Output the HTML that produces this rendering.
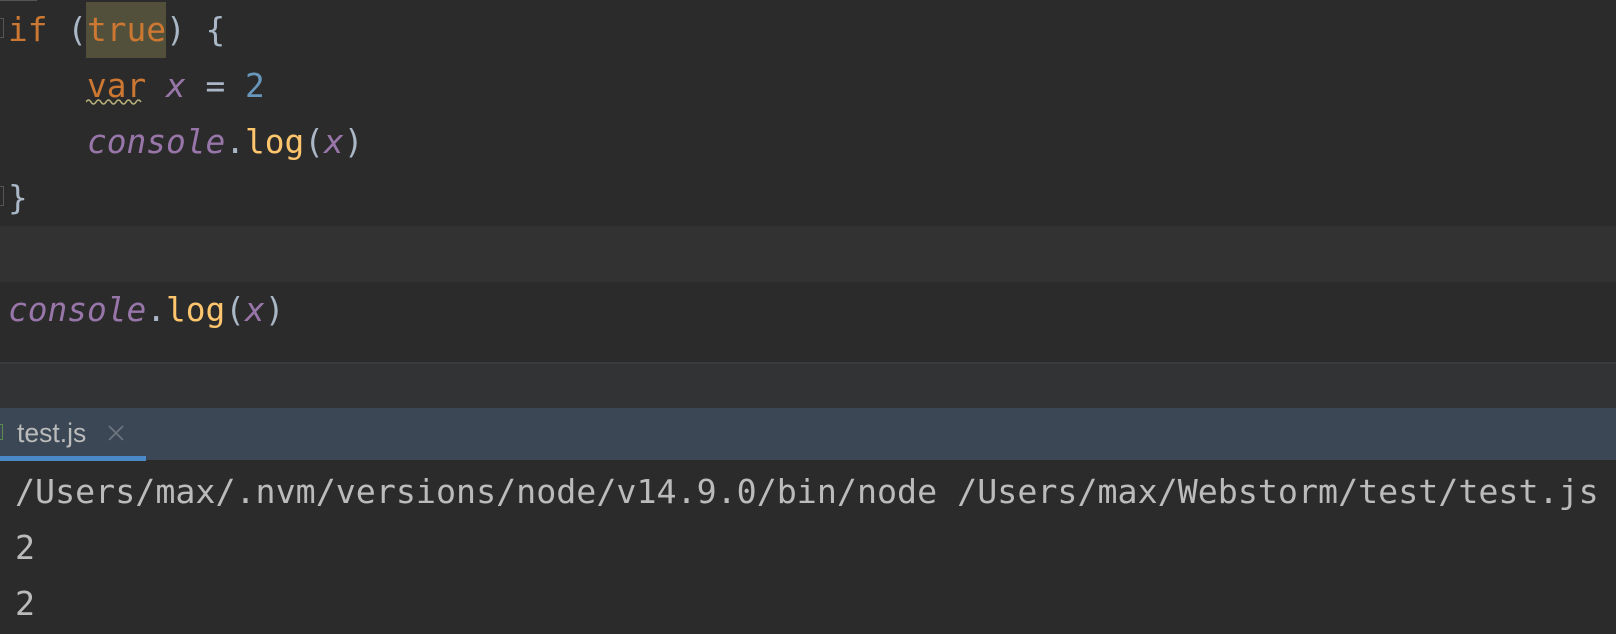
<!DOCTYPE html>
<html><head><meta charset="utf-8"><style>
html,body{margin:0;padding:0;width:1616px;height:634px;overflow:hidden;background:#2b2b2b;}
.a{position:absolute;}
.code{font-family:"DejaVu Sans Mono","Liberation Mono",monospace;font-size:32.8px;white-space:pre;line-height:56px;color:#a9b7c6;}
.k{color:#cc7832}.v{color:#9876aa;font-style:italic}.f{color:#ffc66d}.n{color:#6897bb}
.out{font-family:"DejaVu Sans Mono","Liberation Mono",monospace;font-size:33.3px;white-space:pre;line-height:56px;color:#bbbbbb;}
</style></head><body>
<div class="a" style="left:0;top:0;width:37px;height:1px;background:#555"></div>
<div class="a" style="left:0;top:226px;width:1616px;height:56px;background:#323232"></div>
<div class="a" style="left:86px;top:2px;width:80px;height:56px;background:#52503a"></div>
<div class="a" style="left:0;top:18px;width:3px;height:18px;border:1px solid #555;border-left:none"></div>
<div class="a" style="left:0;top:186px;width:3px;height:18px;border:1px solid #555;border-left:none"></div>
<div class="a code" style="left:8px;top:2px"><span class="k">if</span> (<span class="k">true</span>) {
    <span class="k">var</span> <span class="v">x</span> = <span class="n">2</span>
    <span class="v">console</span>.<span class="f">log</span>(<span class="v">x</span>)
}

<span class="v">console</span>.<span class="f">log</span>(<span class="v">x</span>)</div>
<svg class="a" style="left:86px;top:98px" width="60" height="8"><path d="M0 4 Q2.5 0 5 4 T10 4 T15 4 T20 4 T25 4 T30 4 T35 4 T40 4 T45 4 T50 4 T55 4" stroke="#b9b27a" stroke-width="1.6" fill="none"/></svg>
<div class="a" style="left:0;top:362px;width:1616px;height:2px;background:#3a3b3d"></div>
<div class="a" style="left:0;top:364px;width:1616px;height:44px;background:#313335"></div>
<div class="a" style="left:0;top:408px;width:1616px;height:52px;background:#3b4754"></div>
<div class="a" style="left:0;top:456px;width:146px;height:5px;background:#4a88c7"></div>
<div class="a" style="left:0;top:424px;width:2px;height:14px;border:1px solid #5f8a4f;border-left:none"></div>
<div class="a" style="left:17px;top:416px;font-family:'Liberation Sans',sans-serif;font-size:26.5px;color:#bbbbbb;line-height:34px">test.js</div>
<svg class="a" style="left:108px;top:425px" width="16" height="16"><path d="M1 1L15 15M15 1L1 15" stroke="#6e7680" stroke-width="1.6"/></svg>
<div class="a out" style="left:15px;top:464px">/Users/max/.nvm/versions/node/v14.9.0/bin/node /Users/max/Webstorm/test/test.js
2
2</div>
</body></html>
